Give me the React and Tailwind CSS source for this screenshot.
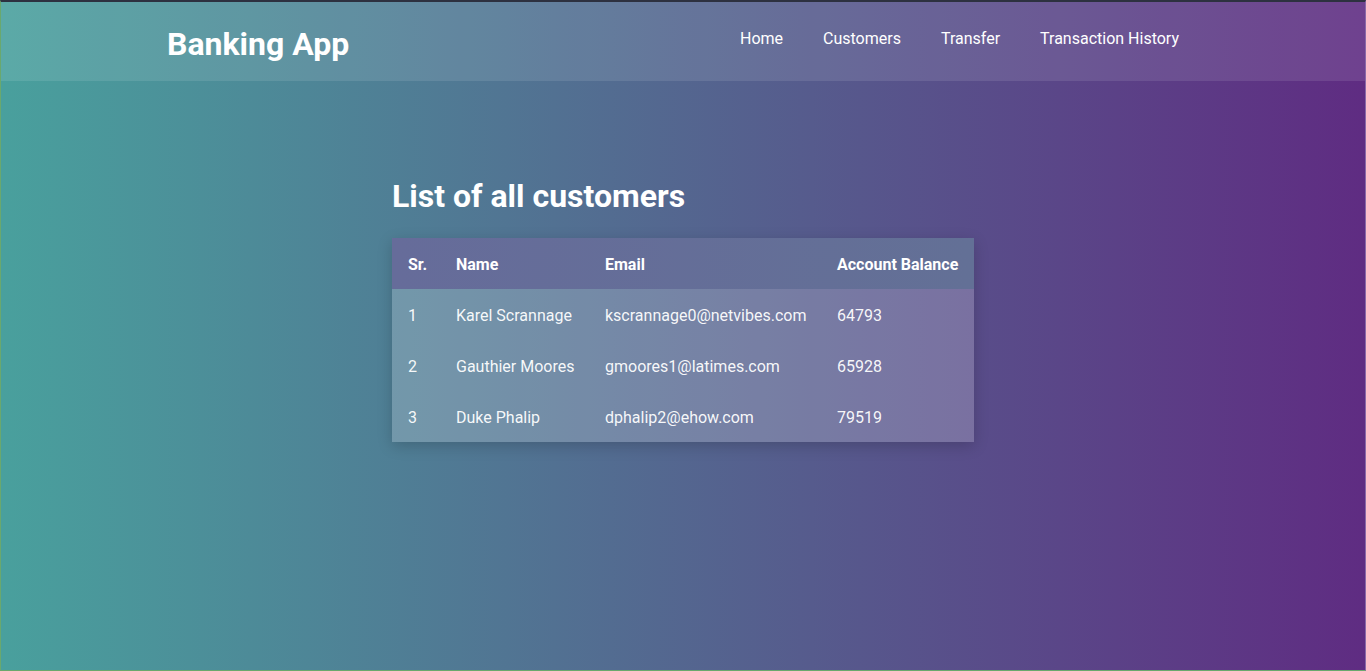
import React from "react";

const rows = [
  { sr: 1, name: "Karel Scrannage", email: "kscrannage0@netvibes.com", bal: "64793" },
  { sr: 2, name: "Gauthier Moores", email: "gmoores1@latimes.com", bal: "65928" },
  { sr: 3, name: "Duke Phalip", email: "dphalip2@ehow.com", bal: "79519" },
];

export default function App() {
  return (
    <div
      className="h-[671px] w-full overflow-hidden bg-[linear-gradient(to_right,#49a09d,#5f2c82)] border-t-2 border-t-[#2d3140] border-l border-l-[#6aa86e] border-b border-b-[#6aa86e] border-r border-r-[#8a6aa8] text-white"
      style={{ fontFamily: "Roboto, 'Open Sans', sans-serif" }}
    >
      <header className="h-[79px] bg-white/10">
        <div className="mx-auto flex w-[1032px] items-start justify-between">
          <h1 className="mt-[23px] text-[32px] font-bold leading-[38px]">Banking App</h1>
          <nav className="mt-[27px] flex text-[16px] leading-[19px]">
            <a className="px-5">Home</a>
            <a className="px-5">Customers</a>
            <a className="px-5">Transfer</a>
            <a className="px-5">Transaction History</a>
          </nav>
        </div>
      </header>
      <main className="mt-[96px] flex justify-center">
        <div className="w-[582px]">
          <h2 className="mb-[23px] text-[32px] font-bold leading-[38px]">List of all customers</h2>
          <table className="w-[582px] table-fixed border-collapse text-left text-[16px] leading-[19px] shadow-[0_4px_14px_rgba(0,0,0,0.18)]">
            <thead className="bg-[linear-gradient(to_right,#666c9a,#637096)]">
              <tr>
                <th className="w-[48px] px-4 pt-[17px] pb-[15px] font-bold whitespace-nowrap">Sr.</th>
                <th className="w-[149px] px-4 pt-[17px] pb-[15px] font-bold whitespace-nowrap">Name</th>
                <th className="w-[232px] px-4 pt-[17px] pb-[15px] font-bold whitespace-nowrap">Email</th>
                <th className="w-[153px] px-4 pt-[17px] pb-[15px] font-bold whitespace-nowrap">Account Balance</th>
              </tr>
            </thead>
            <tbody className="bg-white/20 text-white/95">
              {rows.map((r) => (
                <tr key={r.sr}>
                  <td className="px-4 pt-[17px] pb-[15px] whitespace-nowrap">{r.sr}</td>
                  <td className="px-4 pt-[17px] pb-[15px] whitespace-nowrap">{r.name}</td>
                  <td className="px-4 pt-[17px] pb-[15px] whitespace-nowrap">{r.email}</td>
                  <td className="px-4 pt-[17px] pb-[15px] whitespace-nowrap">{r.bal}</td>
                </tr>
              ))}
            </tbody>
          </table>
        </div>
      </main>
    </div>
  );
}
